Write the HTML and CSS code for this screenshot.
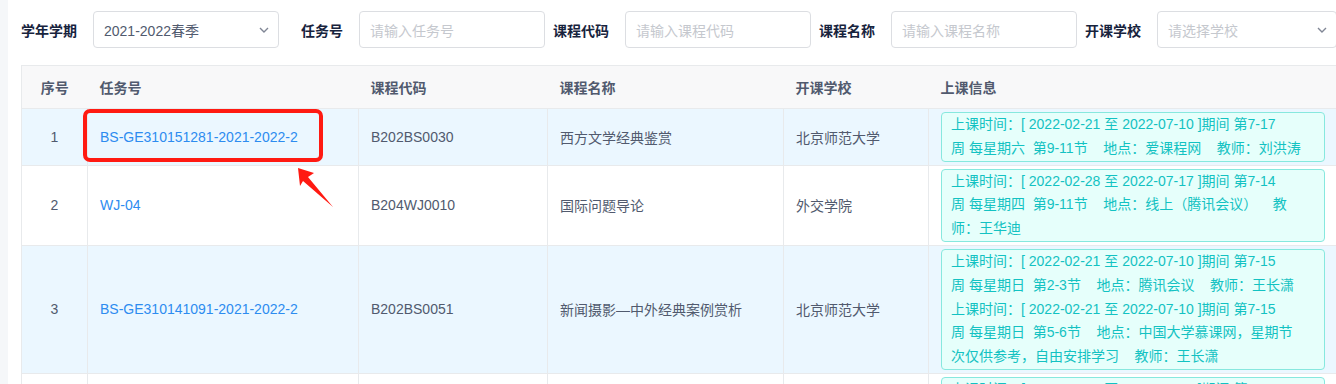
FILE: index.html
```html
<!DOCTYPE html>
<html lang="zh-CN">
<head>
  <meta charset="UTF-8">
  <title>开课任务查询</title>
  <link rel="stylesheet" href="styles.css">
</head>
<body>
  <div class="page">
    <!-- 查询条件 -->
    <div class="search-bar">
      <div class="form-item">
        <label>学年学期</label>
        <div class="control select">
          <span class="value">2021-2022春季</span>
          <svg class="arrow" width="12" height="12" viewBox="0 0 12 12"><path d="M2 4l4 4 4-4" fill="none" stroke="#808695" stroke-width="1.4"/></svg>
        </div>
      </div>
      <div class="form-item">
        <label>任务号</label>
        <div class="control"><span class="placeholder">请输入任务号</span></div>
      </div>
      <div class="form-item">
        <label>课程代码</label>
        <div class="control"><span class="placeholder">请输入课程代码</span></div>
      </div>
      <div class="form-item">
        <label>课程名称</label>
        <div class="control"><span class="placeholder">请输入课程名称</span></div>
      </div>
      <div class="form-item">
        <label>开课学校</label>
        <div class="control select wide">
          <span class="placeholder">请选择学校</span>
          <svg class="arrow" width="12" height="12" viewBox="0 0 12 12"><path d="M2 4l4 4 4-4" fill="none" stroke="#808695" stroke-width="1.4"/></svg>
        </div>
      </div>
    </div>

    <!-- 任务列表 -->
    <table class="task-table">
      <colgroup>
        <col style="width:66px">
        <col style="width:271px">
        <col style="width:189px">
        <col style="width:236px">
        <col style="width:145px">
        <col style="width:409px">
      </colgroup>
      <thead>
        <tr>
          <th class="center">序号</th>
          <th>任务号</th>
          <th>课程代码</th>
          <th>课程名称</th>
          <th>开课学校</th>
          <th>上课信息</th>
        </tr>
      </thead>
      <tbody>
        <tr class="hl">
          <td class="center">1</td>
          <td><a href="#">BS-GE310151281-2021-2022-2</a></td>
          <td>B202BS0030</td>
          <td>西方文学经典鉴赏</td>
          <td>北京师范大学</td>
          <td><div class="info">上课时间：[ 2022-02-21 至 2022-07-10 ]期间 第7-17<br>周 每星期六&nbsp; 第9-11节&nbsp;&nbsp;&nbsp; 地点：爱课程网&nbsp;&nbsp;&nbsp; 教师：刘洪涛</div></td>
        </tr>
        <tr>
          <td class="center">2</td>
          <td><a href="#">WJ-04</a></td>
          <td>B204WJ0010</td>
          <td>国际问题导论</td>
          <td>外交学院</td>
          <td><div class="info">上课时间：[ 2022-02-28 至 2022-07-17 ]期间 第7-14<br>周 每星期四&nbsp; 第9-11节&nbsp;&nbsp;&nbsp; 地点：线上（腾讯会议）&nbsp;&nbsp;&nbsp; 教<br>师：王华迪</div></td>
        </tr>
        <tr class="hl">
          <td class="center">3</td>
          <td><a href="#">BS-GE310141091-2021-2022-2</a></td>
          <td>B202BS0051</td>
          <td>新闻摄影—中外经典案例赏析</td>
          <td>北京师范大学</td>
          <td><div class="info">上课时间：[ 2022-02-21 至 2022-07-10 ]期间 第7-15<br>周 每星期日&nbsp; 第2-3节&nbsp;&nbsp;&nbsp; 地点：腾讯会议&nbsp;&nbsp;&nbsp; 教师：王长潇<br>上课时间：[ 2022-02-21 至 2022-07-10 ]期间 第7-15<br>周 每星期日&nbsp; 第5-6节&nbsp;&nbsp;&nbsp; 地点：中国大学慕课网，星期节<br>次仅供参考，自由安排学习&nbsp;&nbsp;&nbsp; 教师：王长潇</div></td>
        </tr>
        <tr>
          <td class="center">4</td>
          <td><a href="#">BS-GE310141092-2021-2022-2</a></td>
          <td>B202BS0052</td>
          <td>影视艺术鉴赏</td>
          <td>北京师范大学</td>
          <td><div class="info">上课时间：[ 2022-02-21 至 2022-07-10 ]期间 第7-15<br>周 每星期二&nbsp; 第9-11节&nbsp;&nbsp;&nbsp; 地点：线上&nbsp;&nbsp;&nbsp; 教<br>师：王宜文</div></td>
        </tr>
      </tbody>
    </table>
  </div>

  <!-- 截图上的红色标注 -->
  <svg class="markup" width="1336" height="384" viewBox="0 0 1336 384">
    <rect x="85" y="111" width="236" height="49" rx="5" fill="none" stroke="#ff1a12" stroke-width="4"/>
    <polygon points="298,168 314,173 308,177 333,207 303,181 300,186" fill="#ff1a12"/>
  </svg>
</body>
</html>
```

FILE: styles.css
```css
body {
  margin: 0;
  overflow: hidden;
  background: #f5f7f9;
  font-family: "Liberation Sans", "Noto Sans CJK SC", sans-serif;
  font-size: 14px;
  color: #515a6e;
}

.page {
  margin-left: 8px;
  width: 1360px;
  min-height: 384px;
  padding: 11px 0 0 13px;
  background: #fff;
}

/* 查询条件 */
.search-bar {
  display: flex;
  align-items: center;
  height: 37px;
}

.form-item {
  display: flex;
  align-items: center;
  margin-right: 8px;
}

.form-item label {
  width: 72px;
  padding-right: 16px;
  box-sizing: border-box;
  text-align: right;
  font-weight: bold;
  color: #17233d;
  white-space: nowrap;
}

.control {
  display: flex;
  align-items: center;
  width: 186px;
  height: 37px;
  box-sizing: border-box;
  padding: 0 10px;
  border: 1px solid #dcdee2;
  border-radius: 4px;
  background: #fff;
}

.control.wide {
  width: 180px;
}

.control .value {
  color: #515a6e;
}

.control .placeholder {
  color: #c5c8ce;
}

.control .arrow {
  margin-left: auto;
  margin-right: -2px;
}

/* 表格 */
.task-table {
  margin-top: 17px;
  border-collapse: collapse;
  table-layout: fixed;
  width: 1316px;
  border-top: 1px solid #e8eaec;
  border-left: 1px solid #e8eaec;
}

.task-table th {
  height: 42px;
  padding: 0 12px;
  text-align: left;
  font-weight: bold;
  color: #515a6e;
  background: #f8f8f9;
  border-bottom: 1px solid #e8eaec;
}

.task-table td {
  padding: 3px 12px;
  border: 1px solid #e8eaec;
  vertical-align: middle;
  white-space: nowrap;
}

.task-table .center {
  text-align: center;
}

.task-table tr.hl td {
  background: #ebf7ff;
}

.task-table a {
  color: #2d8cf0;
  text-decoration: none;
}

.info {
  padding: 0 9px;
  line-height: 23.8px;
  color: #13c2c2;
  background: #e6fffb;
  border: 1px solid #87e8de;
  border-radius: 4px;
}

.markup {
  position: absolute;
  top: 0;
  left: 0;
  pointer-events: none;
}
```
